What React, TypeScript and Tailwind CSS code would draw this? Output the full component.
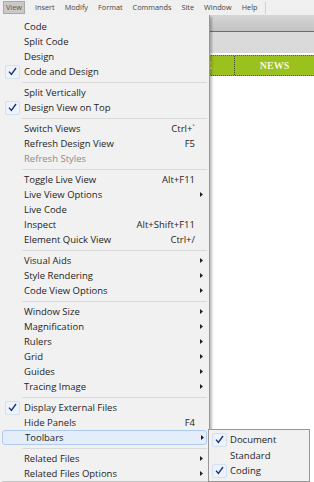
import React from 'react';

type Item =
  | { sep: true }
  | { label: string; shortcut?: string; sub?: boolean; checked?: boolean; disabled?: boolean; active?: boolean };

const items: Item[] = [
  { label: 'Code' },
  { label: 'Split Code' },
  { label: 'Design' },
  { label: 'Code and Design', checked: true },
  { sep: true },
  { label: 'Split Vertically' },
  { label: 'Design View on Top', checked: true },
  { sep: true },
  { label: 'Switch Views', shortcut: 'Ctrl+`' },
  { label: 'Refresh Design View', shortcut: 'F5' },
  { label: 'Refresh Styles', disabled: true },
  { sep: true },
  { label: 'Toggle Live View', shortcut: 'Alt+F11' },
  { label: 'Live View Options', sub: true },
  { label: 'Live Code' },
  { label: 'Inspect', shortcut: 'Alt+Shift+F11' },
  { label: 'Element Quick View', shortcut: 'Ctrl+/' },
  { sep: true },
  { label: 'Visual Aids', sub: true },
  { label: 'Style Rendering', sub: true },
  { label: 'Code View Options', sub: true },
  { sep: true },
  { label: 'Window Size', sub: true },
  { label: 'Magnification', sub: true },
  { label: 'Rulers', sub: true },
  { label: 'Grid', sub: true },
  { label: 'Guides', sub: true },
  { label: 'Tracing Image', sub: true },
  { sep: true },
  { label: 'Display External Files', checked: true },
  { label: 'Hide Panels', shortcut: 'F4' },
  { label: 'Toolbars', sub: true, active: true },
  { sep: true },
  { label: 'Related Files', sub: true },
  { label: 'Related Files Options', sub: true },
];

const toolbars = [
  { label: 'Document', checked: true },
  { label: 'Standard' },
  { label: 'Coding', checked: true },
];

const menuBar = ['View', 'Insert', 'Modify', 'Format', 'Commands', 'Site', 'Window', 'Help'];

const Check = () => (
  <span className="flex h-[14px] w-[15px] items-center justify-center rounded-[2px] border border-[#d3e0f2] bg-[#eef3fa]">
    <svg width="9" height="9" viewBox="0 0 9 9">
      <path d="M1 4.6 L3.4 7.4 L8 1" fill="none" stroke="#1d2f86" strokeWidth="1.4" />
    </svg>
  </span>
);

const Arrow = () => (
  <svg width="3" height="5" viewBox="0 0 3 5" className="absolute left-[198px]">
    <path d="M0 0 L3 2.5 L0 5 Z" fill="#222" />
  </svg>
);

export default function App() {
  return (
    <div
      className="relative h-[482px] w-[314px] overflow-hidden bg-white"
      style={{ fontFamily: '"Open Sans", "Noto Sans", Arial, sans-serif' }}
    >
      {/* menu bar */}
      <div className="flex h-[15px] items-center bg-[#f0f0f0] text-[7.3px] text-[#444]">
        <div className="ml-[3px] flex h-[13px] items-center gap-[10px]">
          {menuBar.map((m, i) => (
            <span
              key={m}
              className={
                i === 0
                  ? 'flex h-[13px] items-center border border-[#a9a9a9] bg-[#c9c9c9] px-[2px] text-[#555]'
                  : 'leading-none'
              }
            >
              {m}
            </span>
          ))}
        </div>
        <div className="ml-[8px] h-[12px] w-px bg-[#cfcfcf]" />
      </div>

      {/* editor area behind the menu */}
      <div className="h-[17px] border-b border-[#6d6d6d] bg-gradient-to-b from-[#d6d6d6] to-[#c3c3c3]" />
      <div className="h-[21px] bg-[#dadada]" />
      <div className="h-[2px] bg-white" />
      <div
        className="flex h-[21px] border-y border-dotted border-[#51690f] bg-[#9bc11f] text-[10px] font-bold text-[#f3f6df]"
        style={{ fontFamily: '"Liberation Serif", serif' }}
      >
        <div className="w-[160px]" />
        <div className="flex w-[78px] items-center justify-center border-r border-dotted border-[#3b4a10]">HOME</div>
        <div className="flex w-[80px] items-center justify-center">NEWS</div>
      </div>

      {/* View dropdown */}
      <div className="absolute left-0 top-[15px] w-[210px] border-r border-[#979797] bg-[#f1f1f1] pt-[4px] text-[9.5px] text-[#1e1e1e] shadow-[2px_2px_2px_rgba(0,0,0,0.25)]">
        {items.map((it, i) =>
          'sep' in it ? (
            <div key={i} className="flex h-[6px] items-center pl-[22px] pr-[2px]">
              <div className="h-px w-full bg-[#dadada]" />
            </div>
          ) : (
            <div
              key={i}
              className={`relative mx-[2px] flex h-[15px] items-center ${
                it.active ? 'rounded-[3px] border border-[#aecaf0] bg-[#e4eefb]' : ''
              }`}
            >
              <div className="absolute left-[2px] flex w-[16px] justify-center">{it.checked && <Check />}</div>
              <span className={`absolute left-[22px] leading-none ${it.disabled ? 'text-[#8c8c8c]' : ''}`}>
                {it.label}
              </span>
              {it.shortcut && <span className="absolute right-[12px] leading-none">{it.shortcut}</span>}
              {it.sub && <Arrow />}
            </div>
          )
        )}
      </div>

      {/* Toolbars submenu */}
      <div className="absolute left-[208px] top-[429px] w-[102px] border border-[#979797] bg-[#f1f1f1] py-[2px] text-[9.5px] text-[#1e1e1e]">
        {toolbars.map((t) => (
          <div key={t.label} className="relative flex h-[15.5px] items-center">
            <div className="absolute left-[2px] flex w-[16px] justify-center">{t.checked && <Check />}</div>
            <span className="absolute left-[21px] leading-none">{t.label}</span>
          </div>
        ))}
      </div>
    </div>
  );
}
